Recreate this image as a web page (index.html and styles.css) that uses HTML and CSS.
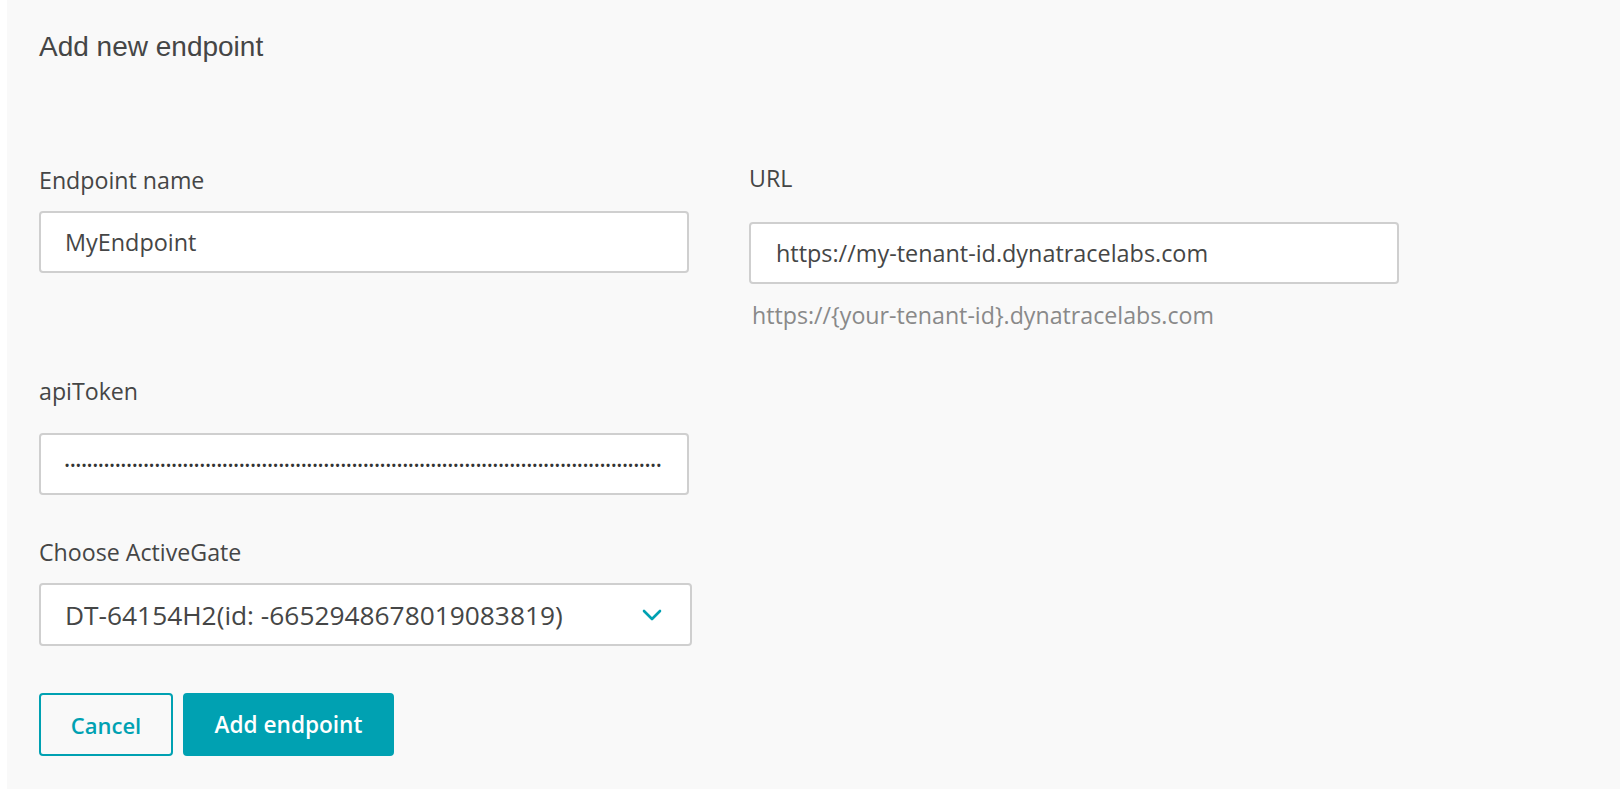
FILE: index.html
```html
<!DOCTYPE html>
<html lang="en">
<head>
<meta charset="utf-8">
<title>Add new endpoint</title>
<link rel="stylesheet" href="styles.css">
</head>
<body>
<main class="panel">
  <h1 class="title">Add new endpoint</h1>
  <div class="form">
    <div class="col col-left">
      <label class="label">Endpoint name</label>
      <div class="field field-name">MyEndpoint</div>

      <label class="label label-token">apiToken</label>
      <div class="field field-token"><span class="dots">••••••••••••••••••••••••••••••••••••••••••••••••••••••••••••••••••••••••••••••••••••••••••••••••••••••••••</span></div>

      <label class="label label-gate">Choose ActiveGate</label>
      <div class="field select">
        <span class="select-text">DT-64154H2(id: -6652948678019083819)</span>
        <svg class="chevron" width="20" height="12" viewBox="0 0 20 12"><path d="M2 2l8 8 8-8" fill="none" stroke="#00a1b2" stroke-width="2.6" stroke-linecap="round" stroke-linejoin="round"/></svg>
      </div>

      <div class="actions">
        <button class="btn btn-secondary">Cancel</button>
        <button class="btn btn-primary">Add endpoint</button>
      </div>
    </div>
    <div class="col col-right">
      <label class="label label-url">URL</label>
      <div class="field field-url">https://my-tenant-id.dynatracelabs.com</div>
      <div class="hint">https://{your-tenant-id}.dynatracelabs.com</div>
    </div>
  </div>
</main>
</body>
</html>
```
FILE: styles.css
```css
html, body {
  margin: 0;
  padding: 0;
  background: #ffffff;
}

.panel {
  margin-left: 7px;
  min-height: 789px;
  box-sizing: border-box;
  background: #f9f9f9;
  padding: 32px 0 0 32px;
  font-family: "Open Sans", "Noto Sans", sans-serif;
  color: #454646;
}

.title {
  margin: 0;
  font-family: "Liberation Sans", Arial, sans-serif;
  font-weight: 400;
  font-size: 28px;
  line-height: 30px;
  color: #454646;
}

.form {
  display: grid;
  grid-template-columns: 650px 649px;
  column-gap: 60px;
  margin-top: 106px;
}

.col {
  display: flex;
  flex-direction: column;
  align-items: flex-start;
}

.label {
  display: block;
  font-size: 23.2px;
  line-height: 24px;
  color: #454646;
}

.field {
  box-sizing: border-box;
  width: 650px;
  height: 62px;
  border: 2px solid #cfcfcf;
  border-radius: 4px;
  background: #ffffff;
  padding: 0 24px;
  display: flex;
  align-items: center;
  font-size: 23.4px;
  color: #454646;
  white-space: nowrap;
  overflow: hidden;
}

.field-name {
  margin-top: 19px;
}

.label-token {
  margin-top: 106px;
}

.field-token {
  margin-top: 30px;
}

.dots {
  font-size: 11px;
  font-weight: 700;
  letter-spacing: 1.5px;
  color: #333434;
}

.label-gate {
  margin-top: 45px;
}

.select {
  margin-top: 19px;
  width: 653px;
  height: 63px;
  justify-content: space-between;
  padding-right: 28px;
}

.select-text {
  font-size: 26.3px;
}

.chevron {
  display: block;
}

.actions {
  display: flex;
  gap: 10px;
  margin-top: 47px;
}

.btn {
  box-sizing: border-box;
  height: 63px;
  border-radius: 4px;
  font-family: "Open Sans", "Noto Sans", sans-serif;
  font-size: 22px;
  font-weight: 600;
  cursor: pointer;
}

.btn-secondary {
  width: 134px;
  background: transparent;
  border: 2px solid #00a1b2;
  color: #00a1b2;
}

.btn-primary {
  width: 211px;
  font-size: 22.6px;
  background: #00a1b2;
  border: 2px solid #00a1b2;
  color: #ffffff;
}

.label-url {
  margin-top: -2px;
}

.field-url {
  margin-top: 32px;
  padding-left: 25px;
}

.hint {
  margin-top: 19px;
  margin-left: 3px;
  font-size: 23.2px;
  line-height: 24px;
  color: #898989;
}
```
